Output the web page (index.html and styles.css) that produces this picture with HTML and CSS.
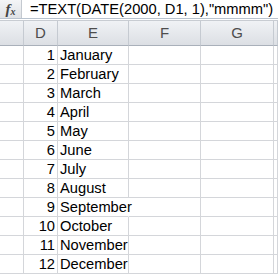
FILE: index.html
```html
<!DOCTYPE html>
<html lang="en">
<head>
    <meta charset="UTF-8">
    <title>Month names</title>
    <link rel="stylesheet" href="styles.css">
</head>
<body>
    <div class="formulabar">
        <div class="fx"><i>f</i><span class="x">x</span></div>
        <div class="formula">=TEXT(DATE(2000, D1, 1),"mmmm")</div>
    </div>
    <div class="sheet">
        <div class="hd"></div><div class="hd">D</div><div class="hd">E</div><div class="hd">F</div><div class="hd">G</div><div class="hd"></div>

        <div class="c"></div><div class="c num">1</div><div class="c txt">January</div><div class="c"></div><div class="c"></div><div class="c"></div>
        <div class="c"></div><div class="c num">2</div><div class="c txt">February</div><div class="c"></div><div class="c"></div><div class="c"></div>
        <div class="c"></div><div class="c num">3</div><div class="c txt">March</div><div class="c"></div><div class="c"></div><div class="c"></div>
        <div class="c"></div><div class="c num">4</div><div class="c txt">April</div><div class="c"></div><div class="c"></div><div class="c"></div>
        <div class="c"></div><div class="c num">5</div><div class="c txt">May</div><div class="c"></div><div class="c"></div><div class="c"></div>
        <div class="c"></div><div class="c num">6</div><div class="c txt">June</div><div class="c"></div><div class="c"></div><div class="c"></div>
        <div class="c"></div><div class="c num">7</div><div class="c txt">July</div><div class="c"></div><div class="c"></div><div class="c"></div>
        <div class="c"></div><div class="c num">8</div><div class="c txt">August</div><div class="c"></div><div class="c"></div><div class="c"></div>
        <div class="c"></div><div class="c num">9</div><div class="c txt spill">September</div><div class="c"></div><div class="c"></div><div class="c"></div>
        <div class="c"></div><div class="c num">10</div><div class="c txt">October</div><div class="c"></div><div class="c"></div><div class="c"></div>
        <div class="c"></div><div class="c num">11</div><div class="c txt">November</div><div class="c"></div><div class="c"></div><div class="c"></div>
        <div class="c"></div><div class="c num">12</div><div class="c txt">December</div><div class="c"></div><div class="c"></div><div class="c"></div>
    </div>
</body>
</html>
```

FILE: styles.css
```css
body {
    margin: 0;
    width: 278px;
    background-color: #fff;
    font-family: "Liberation Sans", Arial, sans-serif;
    overflow: hidden;
}

.formulabar {
    display: flex;
    height: 19px;
    border-bottom: 1px solid #b9c3cf;
    box-sizing: border-box;
}
.fx {
    width: 22px;
    flex-shrink: 0;
    box-sizing: border-box;
    border-right: 1px solid #c4c9d0;
    background: linear-gradient(#f4f5f7, #dfe2e6);
    display: flex;
    align-items: center;
    justify-content: center;
    font-family: "Liberation Serif", serif;
    color: #444;
}
.fx i {
    font-size: 15px;
    font-weight: bold;
}
.fx .x {
    font-size: 10px;
    font-style: italic;
    font-weight: bold;
    margin-top: 4px;
}
.formula {
    padding-left: 8px;
    font-size: 14.7px;
    line-height: 18px;
    color: #000;
    white-space: nowrap;
}

.sheet {
    margin-top: 1px;
    border-top: 1px solid #c8ccd2;
    display: grid;
    grid-template-columns: 24px 34px 71px 72px 73px 4px;
    grid-template-rows: 25px;
    grid-auto-rows: 19px;
}
.hd {
    box-sizing: border-box;
    border-right: 1px solid #c5cad1;
    border-bottom: 1px solid #a9b0ba;
    background: linear-gradient(#f0f2f5, #dcdfe4);
    color: #4d4d4d;
    font-size: 15px;
    line-height: 24px;
    text-align: center;
}
.c {
    box-sizing: border-box;
    border-right: 1px solid #d4d6da;
    border-bottom: 1px solid #d4d6da;
    font-size: 14.7px;
    line-height: 19px;
    white-space: nowrap;
    color: #000;
}
.num {
    text-align: right;
    padding-right: 2px;
}
.txt {
    padding-left: 2px;
    overflow: visible;
    position: relative;
    z-index: 1;
}
.spill {
    border-right-color: #fff;
}
```
